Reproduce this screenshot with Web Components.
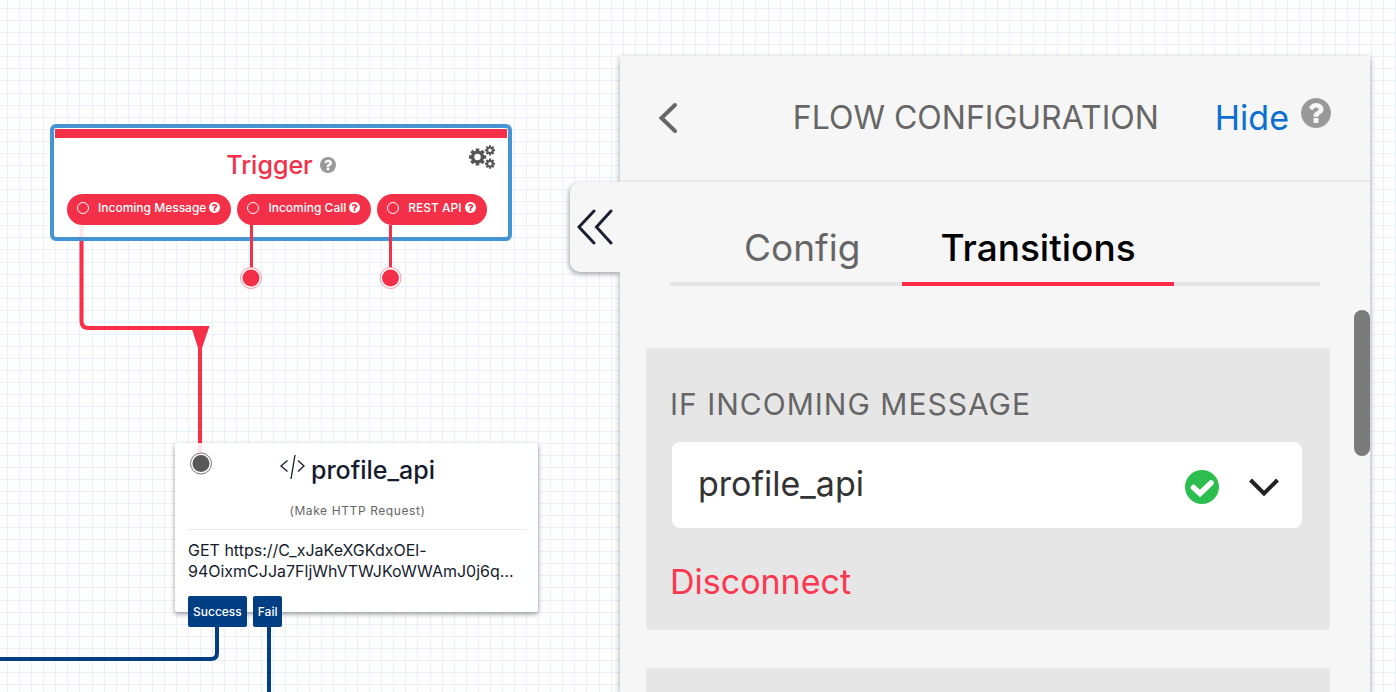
<!DOCTYPE html>
<html lang="en">
<head>
<meta charset="utf-8">
<title>Flow Configuration</title>
<style>
    html, body { height: 100%; margin: 0; }
    body {
        font-family: Inter, "Liberation Sans", sans-serif;
        overflow: hidden;
        --red: #f43048;
        --navy: #023e84;
        --grey: #666;
    }
</style>
</head>
<body>
<flow-app>
    <flow-canvas slot="canvas">
        <trigger-node>
            <flow-pill>Incoming Message</flow-pill>
            <flow-pill>Incoming Call</flow-pill>
            <flow-pill>REST API</flow-pill>
        </trigger-node>
        <request-node></request-node>
    </flow-canvas>
    <config-panel slot="panel">
        <transition-group name="IF INCOMING MESSAGE" target="profile_api"></transition-group>
        <transition-group></transition-group>
    </config-panel>
</flow-app>
<script>
const define = (name, html) => {
    customElements.define(name, class extends HTMLElement {
        connectedCallback() {
            this.attachShadow({ mode: 'open' });
            this.shadowRoot.innerHTML = typeof html === 'function' ? html(this) : html;
        }
    });
};

// grid lines, 14 cells to a 169px tile
const gridPath = () => {
    let d = '';
    for (let i = 0; i < 14; i++) {
        const p = Math.round(7 + i * 169 / 14);
        d += `M${p} 0h1v169h-1zM0 ${p + 1}h169v1h-169z`;
    }
    return d;
};

const gear = (cx, cy, outer, inner, hole) => {
    const pts = [];
    for (let i = 0; i < 8; i++) {
        const a = i * Math.PI / 4;
        [[-0.27, inner], [-0.2, outer], [0.2, outer], [0.27, inner]].forEach(([o, r]) => {
            pts.push(`${(cx + r * Math.cos(a + o)).toFixed(2)} ${(cy + r * Math.sin(a + o)).toFixed(2)}`);
        });
    }
    return `M${pts.join('L')}zM${cx - hole} ${cy}a${hole} ${hole} 0 1 0 ${hole * 2} 0a${hole} ${hole} 0 1 0 ${-hole * 2} 0z`;
};

define('help-icon', `
    <style>
        :host { display: block; width: 16px; height: 16px; color: #999; flex: none; }
        svg { display: block; width: 100%; height: 100%; }
    </style>
    <svg viewBox="128 128 1536 1536" fill="currentColor" aria-hidden="true"><path d="M1024 1376v-192q0-14-9-23t-23-9h-192q-14 0-23 9t-9 23v192q0 14 9 23t23 9h192q14 0 23-9t9-23zm256-672q0-88-55.5-163t-138.5-116-170-41q-243 0-371 213-15 24 8 42l132 100q7 6 19 6 16 0 25-12 53-68 86-92 34-24 86-24 48 0 85.500 26t37.500 59q0 38-20 61t-68 45q-63 28-115.500 86.500t-52.500 125.500v36q0 14 9 23t23 9h192q14 0 23-9t9-23q0-19 21.500-49.500t54.500-49.500q32-18 49-28.500t46-35 44.500-48 28-60.500 12.500-81zm384 192q0 209-103 385.500t-279.500 279.500-385.500 103-385.500-103-279.500-279.500-103-385.500 103-385.500 279.500-279.500 385.500-103 385.500 103 279.500 279.500 103 385.500z"/></svg>
`);

define('flow-pill', `
    <style>
        :host {
            display: flex;
            align-items: center;
            box-sizing: border-box;
            height: 31px;
            padding: 0 11px 4px 10px;
            border-radius: 16px;
            background: var(--red);
            color: white;
            font-size: 12px;
            font-weight: 500;
            line-height: 16px;
            white-space: nowrap;
        }
        .port {
            box-sizing: border-box;
            width: 12px;
            height: 12px;
            margin-right: 9px;
            border: 1px solid white;
            border-radius: 50%;
        }
        help-icon { width: 11px; height: 11px; margin-left: 3px; color: white; }
    </style>
    <span class="port"></span>
    <slot></slot>
    <help-icon></help-icon>
`);

define('trigger-node', () => `
    <style>
        :host {
            display: block;
            box-sizing: border-box;
            width: 462px;
            height: 117px;
            border: 4px solid #4594d4;
            border-radius: 6px;
            background: white;
        }
        .bar { height: 9px; margin: 1px 1px 0; background: var(--red); }
        header {
            display: grid;
            grid-template-columns: 1fr auto 1fr;
            padding: 7px 13px 0;
            align-items: start;
        }
        .title {
            grid-column: 2;
            display: flex;
            align-items: center;
            gap: 7px;
            color: var(--red);
        }
        h2 { margin: 0; font-size: 25px; font-weight: 500; line-height: 40px; }
        button {
            justify-self: end;
            padding: 0;
            border: 0;
            background: none;
            color: #555;
            cursor: pointer;
        }
        button svg { display: block; }
        .pills { display: flex; gap: 6px; padding: 9px 13px 0; }
    </style>
    <div class="bar"></div>
    <header>
        <div class="title"><h2>Trigger</h2><help-icon></help-icon></div>
        <button aria-label="Settings">
            <svg width="26" height="24" fill="currentColor" fill-rule="evenodd">
                <path d="${gear(8.5, 12, 8.8, 6.6, 3.2)}"/>
                <path d="${gear(21, 5.3, 5.2, 3.9, 1.8)}"/>
                <path d="${gear(21, 18.7, 5.2, 3.9, 1.8)}"/>
            </svg>
        </button>
    </header>
    <div class="pills"><slot></slot></div>
`);

define('request-node', `
    <style>
        :host {
            display: block;
            box-sizing: border-box;
            width: 363px;
            height: 169px;
            padding: 8px 11px 0 13px;
            border-radius: 2px;
            background: white;
            box-shadow: 0 2px 5px rgba(0, 0, 0, 0.4);
            color: #151b2c;
        }
        header { display: flex; justify-content: center; gap: 6px; }
        h2 { margin: 0; font-size: 25px; font-weight: 500; line-height: 38px; }
        header svg { margin-top: 3px; }
        .kind {
            margin: 0;
            padding: 14px 0 11px;
            border-bottom: 1px solid #ebebeb;
            color: var(--grey);
            font-size: 12px;
            line-height: 15px;
            letter-spacing: 0.05em;
            text-align: center;
        }
        .url { margin: 10px 0 0; font-size: 16px; line-height: 21px; }
        .exits { display: flex; gap: 6px; margin-top: 14px; }
        .exits button {
            height: 31px;
            padding: 0 5px;
            border: 0;
            border-radius: 2px;
            background: var(--navy);
            color: white;
            font: 500 12px/16px Inter, sans-serif;
        }
    </style>
    <header>
        <svg width="25" height="26" fill="none" stroke="currentColor" stroke-width="1.3"><path d="M7.500 6.500l-6.500 5.500l6.500 5.500M18 6.500l6 5.500l-6 5.500M15 1l-4 24"/></svg>
        <h2>profile_api</h2>
    </header>
    <p class="kind">(Make HTTP Request)</p>
    <p class="url">GET https://C_xJaKeXGKdxOEl-<br>94OixmCJJa7FljWhVTWJKoWWAmJ0j6q...</p>
    <div class="exits"><button>Success</button><button>Fail</button></div>
`);

define('flow-canvas', () => `
    <style>
        :host { display: block; position: relative; overflow: hidden; background: #fefefe; }
        svg { position: absolute; top: 0; left: 0; width: 100%; height: 100%; }
        .over { pointer-events: none; }
        ::slotted(trigger-node) { position: absolute; left: 50px; top: 124px; }
        ::slotted(request-node) { position: absolute; left: 175px; top: 443px; }
    </style>
    <svg>
        <defs>
            <pattern id="grid" width="169" height="169" patternUnits="userSpaceOnUse">
                <path d="${gridPath()}" fill="#e8f1fd"/>
            </pattern>
        </defs>
        <rect width="100%" height="100%" fill="url(#grid)"/>
        <g fill="none" stroke="#fc2f47" stroke-width="4">
            <path d="M81.500 240V321q0 7 7 7H200V444"/>
        </g>
        <path d="M191 326h18.500l-7.500 22h-4z" fill="#f43048"/>
    </svg>
    <slot></slot>
    <svg class="over">
        <g fill="none" stroke="#f43048">
            <path d="M81.500 225v12M200 443v10" stroke-width="4" opacity=".12"/>
            <path d="M251.500 225v45M390.500 225v45" stroke-width="3"/>
        </g>
        <g fill="none" stroke="#023e84" stroke-width="4">
            <path d="M217 627v26q0 6-6 6H0M269 627V2000"/>
        </g>
        <g fill="white" stroke-width="1">
            <circle cx="251" cy="278" r="10.500" stroke="#f899a5"/>
            <circle cx="390.500" cy="278" r="10.500" stroke="#f899a5"/>
            <circle cx="201" cy="463.500" r="10.500" stroke="#777"/>
        </g>
        <circle cx="251" cy="278" r="8.500" fill="#f43048"/>
        <circle cx="390.500" cy="278" r="8.500" fill="#f43048"/>
        <circle cx="201" cy="463.500" r="8.500" fill="#595959"/>
    </svg>
`);

define('transition-group', (el) => `
    <style>
        :host {
            display: block;
            box-sizing: border-box;
            min-height: 282px;
            padding: 36px 26px 26px 24px;
            border-radius: 4px;
            background: #e6e6e6;
        }
        label {
            display: block;
            color: var(--grey);
            font-size: 30px;
            line-height: 40px;
            letter-spacing: 1px;
        }
        .field { display: grid; align-items: center; margin: 18px 2px 33px; }
        .field > * { grid-area: 1 / 1; }
        select {
            appearance: none;
            width: 100%;
            height: 86px;
            padding: 0 130px 4px 26px;
            border: 0;
            border-radius: 8px;
            background: white;
            color: #333;
            font: 34px Inter, sans-serif;
        }
        .marks {
            justify-self: end;
            display: flex;
            align-items: center;
            gap: 30px;
            padding: 4px 23px 0 0;
            pointer-events: none;
        }
        .disconnect {
            display: block;
            padding: 0;
            border: 0;
            background: none;
            color: #fc3850;
            font: 34px/42px Inter, sans-serif;
            cursor: pointer;
        }
    </style>
    ${el.hasAttribute('name') ? `
    <label for="target">${el.getAttribute('name')}</label>
    <div class="field">
        <select id="target"><option>${el.getAttribute('target')}</option></select>
        <span class="marks">
            <svg width="34" height="34"><circle cx="17" cy="17" r="17" fill="#2dbe50"/><path d="M8.500 17.500L15 23.500L26 13" fill="none" stroke="white" stroke-width="5.500" stroke-linecap="round"/></svg>
            <svg width="30" height="18" fill="none" stroke="#222" stroke-width="4"><path d="M1.500 2L15 15.500L28.500 2"/></svg>
        </span>
    </div>
    <button class="disconnect">Disconnect</button>` : ''}
`);

define('config-panel', `
    <style>
        :host {
            display: flex;
            flex-direction: column;
            position: relative;
            min-width: 0;
            background: #f6f6f6;
            box-shadow: 0 2px 6px rgba(0, 0, 0, 0.35);
        }
        header {
            display: flex;
            align-items: center;
            height: 124px;
            padding: 0 39px 0 38px;
            border-bottom: 2px solid #ebebeb;
        }
        button { padding: 0; border: 0; background: none; font-family: inherit; cursor: pointer; }
        svg { display: block; }
        h1 {
            margin: 0 56px 0 auto;
            color: var(--grey);
            font-size: 32px;
            font-weight: 400;
            line-height: 42px;
            white-space: nowrap;
        }
        a { color: #0b6fd0; font-size: 34px; line-height: 42px; text-decoration: none; }
        header help-icon { width: 30px; height: 30px; margin: 0 0 10px 12px; }
        .handle {
            position: absolute;
            left: -50px;
            top: 126px;
            width: 50px;
            height: 90px;
            padding-left: 7px;
            border-radius: 10px 0 0 10px;
            background: #f6f6f6;
            box-shadow: -1px 2px 5px rgba(0, 0, 0, 0.35);
            clip-path: inset(-10px 0 -10px -10px);
        }
        .content { flex: 1; min-height: 0; overflow: hidden; padding: 40px 40px 0 26px; }
        nav {
            display: flex;
            gap: 4px;
            margin: 0 10px 62px 24px;
            padding-left: 36px;
            border-bottom: 4px solid #e6e6e6;
        }
        nav button {
            margin-bottom: -4px;
            padding: 0 38px 8px;
            border-bottom: 4px solid transparent;
            color: var(--grey);
            font-size: 37px;
            line-height: 52px;
        }
        nav .active { border-color: #fc2c47; color: black; font-weight: 500; }
        .groups { display: flex; flex-direction: column; gap: 38px; }
        .thumb {
            position: absolute;
            right: 0;
            top: 254px;
            width: 16px;
            height: 146px;
            border-radius: 8px;
            background: #7b7b7b;
        }
    </style>
    <header>
        <button aria-label="Back"><svg width="20" height="32" fill="none" stroke="#666" stroke-width="4" stroke-linecap="round"><path d="M17 3L3.500 16L17 29"/></svg></button>
        <h1>FLOW CONFIGURATION</h1>
        <a href="#">Hide</a>
        <help-icon></help-icon>
    </header>
    <div class="content">
        <nav>
            <button>Config</button>
            <button class="active">Transitions</button>
        </nav>
        <div class="groups"><slot></slot></div>
    </div>
    <div class="thumb"></div>
    <button class="handle" aria-label="Expand">
        <svg width="38" height="36" fill="none" stroke="#1b1f30" stroke-width="3" stroke-linecap="round"><path d="M17 2L2 18L17 34M34 2L19.500 18L34 34"/></svg>
    </button>
`);

define('flow-app', `
    <style>
        :host {
            display: grid;
            grid-template-columns: 620px minmax(0, 1fr) 26px;
            grid-template-rows: 56px minmax(0, 1fr);
            height: 100vh;
        }
        slot[name="canvas"]::slotted(*) { grid-area: 1 / 1 / -1 / -1; }
        slot[name="panel"]::slotted(*) { grid-area: 2 / 2; }
    </style>
    <slot name="canvas"></slot>
    <slot name="panel"></slot>
`);
</script>
</body>
</html>
